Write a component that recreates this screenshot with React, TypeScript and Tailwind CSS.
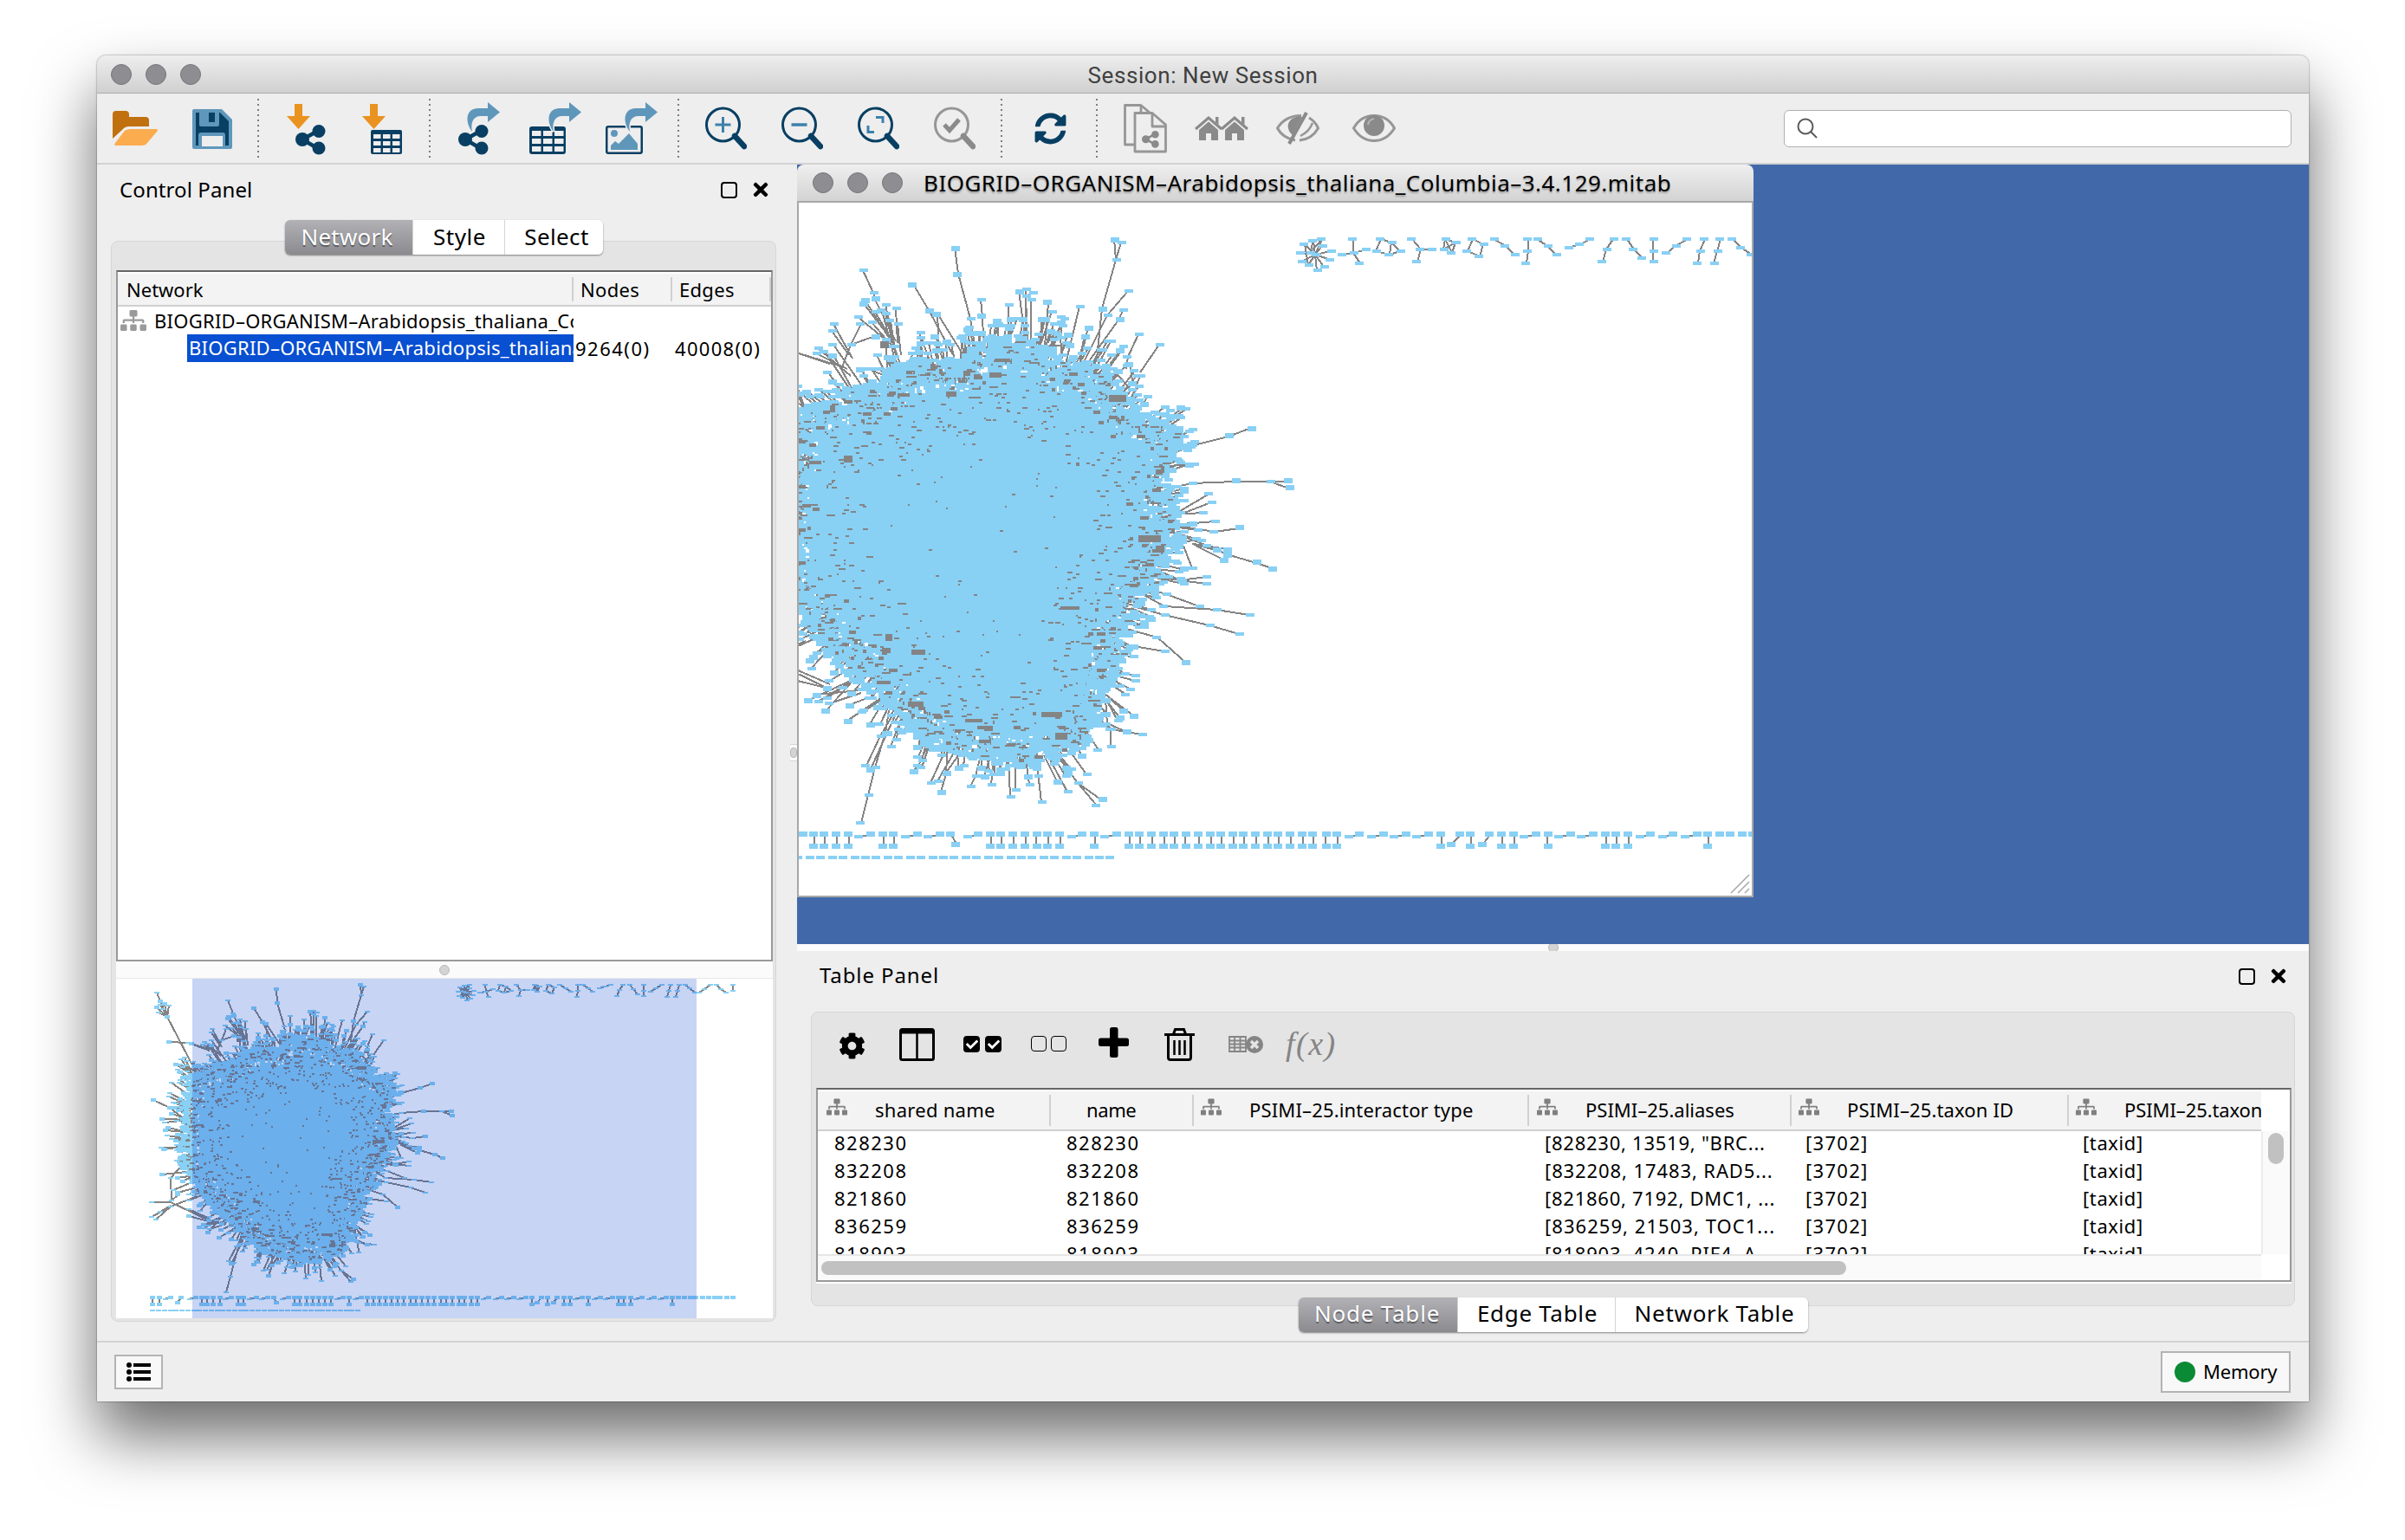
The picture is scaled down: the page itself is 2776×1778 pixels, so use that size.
import type { ReactNode } from "react";
import { FaCheck, FaCog, FaSitemap, FaSyncAlt, FaTimes } from "react-icons/fa";

type Pt = [number, number];
type Chain = Pt[];

/* ---------- network model ---------- */

function makeRandom(seed: number) {
  let s = seed;
  return () => {
    s = (s + 0x6d2b79f5) | 0;
    let t = Math.imul(s ^ (s >>> 15), 1 | s);
    t = (t + Math.imul(t ^ (t >>> 7), 61 | t)) ^ t;
    return ((t ^ (t >>> 14)) >>> 0) / 4294967296;
  };
}

const OUTLINE: Pt[] = [
  [2, 253], [23, 243], [60, 233], [100, 223], [121, 199], [149, 193], [190, 196], [206, 176],
  [243, 166], [280, 179], [304, 196], [337, 199], [353, 213], [370, 236], [390, 256], [428, 268],
  [425, 283], [415, 306], [412, 329], [418, 339], [422, 366], [428, 389], [415, 406], [398, 419],
  [404, 436], [384, 449], [376, 479], [357, 499], [364, 519], [351, 539], [341, 563], [337, 586],
  [325, 606], [317, 619], [288, 630], [264, 640], [239, 636], [206, 626], [182, 621], [153, 617],
  [145, 603], [117, 579], [100, 556], [76, 539], [64, 519], [39, 509], [27, 483], [7, 456],
  [-12, 436], [-12, 371], [-3, 319], [0, 280],
];

// Branches are grouped by the sheet of the layout that they were laid out on.
const UPPER: Chain[] = [
  [[330, 640], [272, 497], [266, 476], [237, 396]],
  [[490, 690], [424, 534], [377, 444]], [[520, 690], [444, 546], [424, 534]], [[452, 670], [444, 546]],
  [[556, 670], [541, 564], [504, 408], [497, 318]], [[577, 690], [572, 555], [571, 497]],
  [[895, 700], [914, 528], [953, 360], [948, 288]], [[953, 360], [967, 300]],
  [[860, 720], [928, 552], [987, 468]], [[865, 730], [963, 564], [972, 534]], [[810, 720], [850, 522]],
  [[982, 740], [985, 695], [1016, 618]], [[1020, 750], [1075, 654]], [[652, 640], [649, 597], [649, 518]],
  [[694, 640], [697, 459]], [[700, 640], [697, 483], [718, 474]], [[694, 650], [678, 470]],
  [[712, 640], [712, 497]], [[750, 660], [759, 507]], [[798, 700], [795, 632], [798, 555]],
  [[755, 650], [800, 590], [806, 564]], [[740, 640], [742, 567]], [[745, 657], [819, 654]],
  [[762, 650], [776, 581]], [[600, 690], [615, 570]], [[590, 690], [600, 588]], [[850, 720], [874, 594]],
  [[850, 700], [863, 624]], [[880, 740], [928, 642]], [[875, 730], [916, 672]], [[640, 660], [674, 564]],
  [[700, 660], [694, 588]], [[175, 730], [203, 654], [228, 582]], [[203, 654], [272, 624]],
  [[205, 700], [154, 582]], [[195, 690], [149, 606]], [[200, 760], [110, 666]], [[190, 740], [103, 684]],
  [[230, 790], [150, 654]], [[180, 730], [40, 676]], [[75, 880], [50, 800]], [[215, 840], [125, 680]],
  [[225, 850], [150, 690]], [[345, 690], [335, 582]], [[325, 660], [223, 558]], [[320, 650], [242, 500]],
  [[325, 650], [301, 516]], [[335, 650], [330, 530]], [[318, 640], [272, 540]], [[322, 650], [238, 515]],
  [[318, 660], [262, 576]], [[324, 660], [312, 567]], [[320, 670], [288, 536]], [[330, 690], [300, 546]],
  [[400, 680], [399, 609]], [[525, 740], [517, 624]], [[520, 730], [531, 600]], [[476, 750], [473, 642]],
  [[410, 760], [399, 650]], [[440, 760], [420, 650]], [[300, 760], [251, 738]], [[250, 780], [228, 740]],
  [[215, 830], [170, 790]], [[210, 850], [155, 816]], [[260, 860], [220, 800]], [[290, 850], [247, 790]],
  [[310, 800], [300, 640]], [[330, 800], [320, 660]], [[350, 760], [375, 684]], [[1000, 800], [988, 720]],
  [[985, 800], [943, 736]], [[1000, 820], [1022, 762]], [[985, 850], [1015, 798]],
  [[1090, 1034], [1154, 1014], [1170, 1000], [1272, 971], [1335, 942]],
  [[1100, 1150], [1168, 1134], [1291, 1125], [1388, 1125], [1437, 1125]], [[1388, 1125], [1442, 1149]],
  [[1100, 1076], [1173, 1065]], [[1110, 1062], [1125, 1050]], [[1130, 1230], [1215, 1170]],
  [[1130, 1240], [1223, 1200]], [[1120, 1240], [1197, 1238]], [[1100, 1275], [1170, 1272], [1232, 1266]],
  [[1080, 1276], [1183, 1294]], [[1110, 1280], [1230, 1299], [1300, 1287]], [[1110, 1300], [1178, 1323]],
  [[1120, 1310], [1210, 1352], [1266, 1380], [1350, 1407], [1393, 1428]], [[1170, 1345], [1266, 1362]],
  [[1165, 1342], [1240, 1366]], [[1175, 1350], [1257, 1398]], [[1140, 1350], [1168, 1428], [1145, 1430]],
  [[1080, 1440], [1134, 1467], [1208, 1455]], [[1134, 1467], [1208, 1482]],
  [[1000, 1400], [1085, 1416], [1145, 1432]], [[1000, 900], [1030, 860], [1040, 835]],
  [[1060, 960], [1105, 914]], [[1055, 950], [1073, 918]], [[1110, 980], [1145, 971]],
];

const LOWER: Chain[] = [
  [[1010, 110], [1095, 138], [1188, 180]], [[1000, 120], [1086, 180], [1237, 191], [1330, 210]],
  [[1000, 180], [1090, 207], [1217, 243], [1300, 276]], [[980, 255], [1068, 288], [1151, 375]],
  [[930, 312], [1000, 318], [1090, 336]], [[940, 350], [1000, 352]], [[920, 400], [1008, 420]],
  [[930, 415], [1006, 437]], [[915, 420], [993, 467]], [[920, 440], [980, 484]], [[1010, 245], [1050, 222]],
  [[900, 470], [1002, 558]], [[905, 470], [972, 540]], [[920, 500], [925, 590], [938, 608]],
  [[935, 610], [938, 668]], [[870, 570], [938, 608], [1026, 621]], [[920, 500], [957, 573]],
  [[925, 510], [963, 566]], [[930, 590], [985, 617]], [[770, 670], [845, 790], [896, 867]],
  [[845, 790], [914, 849]], [[820, 680], [870, 762]], [[780, 680], [825, 744]], [[750, 680], [815, 822]],
  [[745, 690], [786, 786]], [[770, 690], [811, 768]], [[725, 700], [742, 858]], [[728, 700], [732, 768]],
  [[697, 710], [707, 800]], [[668, 700], [668, 816]], [[646, 700], [654, 840]], [[640, 700], [640, 744]],
  [[610, 670], [600, 798]], [[574, 670], [556, 770], [541, 806]], [[604, 670], [580, 768]],
  [[475, 650], [473, 759], [458, 822]], [[480, 650], [428, 792]], [[500, 670], [448, 786]],
  [[520, 670], [473, 755]], [[425, 640], [392, 729], [379, 750]], [[407, 590], [390, 666]],
  [[345, 570], [316, 666]], [[350, 560], [330, 642]], [[320, 560], [286, 632], [243, 729]],
  [[310, 540], [300, 620], [270, 738], [252, 831], [228, 930]], [[335, 540], [306, 620], [257, 747]],
  [[315, 470], [257, 588]], [[310, 480], [193, 576]], [[320, 480], [235, 546]], [[330, 480], [277, 528]],
  [[325, 470], [240, 540]], [[210, 430], [130, 540]], [[210, 430], [83, 504]], [[205, 436], [110, 510]],
  [[205, 440], [134, 495]], [[250, 465], [105, 486]], [[150, 470], [30, 430]], [[140, 450], [30, 388]],
  [[145, 316], [90, 396]], [[140, 310], [85, 366]], [[130, 312], [105, 342]], [[220, 380], [140, 438]],
  [[210, 360], [158, 366]], [[120, 282], [30, 330]], [[110, 225], [30, 290]], [[110, 235], [55, 270]],
  [[90, 270], [50, 274]], [[90, 160], [40, 195]], [[80, 150], [50, 180]], [[260, 490], [198, 522]],
  [[230, 480], [140, 516]], [[370, 540], [335, 606]],
];

const WESTERN: Chain[] = [
  [[212, 440], [143, 244], [127, 190], [119, 162]], [[143, 244], [120, 212]], [[143, 244], [148, 206]],
  [[143, 244], [134, 216]], [[143, 244], [124, 230]], [[143, 244], [128, 203]], [[143, 244], [138, 200]],
  [[240, 356], [190, 331], [147, 329]], [[197, 436], [162, 404]], [[197, 432], [174, 387]],
  [[197, 430], [182, 380]], [[198, 434], [172, 404]], [[198, 430], [187, 392]], [[205, 500], [192, 470]],
  [[200, 610], [150, 550], [112, 524]], [[205, 520], [153, 467]], [[205, 545], [150, 500]],
  [[205, 540], [158, 534]], [[205, 550], [148, 512]], [[205, 530], [180, 502]], [[205, 555], [176, 540]],
  [[200, 592], [131, 587]], [[195, 592], [138, 601]], [[200, 600], [165, 594]], [[205, 600], [184, 580]],
  [[200, 640], [178, 625]], [[200, 660], [144, 644]], [[200, 657], [154, 655]], [[200, 650], [166, 640]],
  [[200, 684], [130, 684]], [[195, 672], [140, 692]], [[200, 700], [165, 694]], [[195, 680], [136, 690]],
  [[205, 740], [178, 738]], [[205, 720], [182, 710]], [[205, 765], [131, 777]], [[182, 735], [151, 786], [153, 864]],
  [[205, 780], [166, 788]], [[205, 800], [158, 828]], [[210, 820], [166, 838]], [[205, 780], [178, 800]],
  [[212, 848], [151, 884], [118, 929]], [[153, 868], [109, 868]], [[151, 870], [237, 932]],
  [[151, 884], [109, 918]], [[151, 880], [128, 900]], [[153, 864], [166, 846]],
];

// Small components along the top edge, each a list of nodes and the links between them.
const SMALL: { nodes: Pt[]; links: Pt[] }[] = [
  {
    nodes: [[152, 160], [118, 126], [144, 114], [172, 108], [175, 132], [107, 156], [201, 150], [112, 186], [133, 198], [159, 213], [180, 204], [196, 180], [138, 156]],
    links: [[0, 1], [0, 2], [0, 3], [0, 4], [0, 5], [0, 6], [0, 7], [0, 8], [0, 9], [0, 10], [0, 11], [1, 8], [2, 12], [3, 12]],
  },
  { nodes: [[269, 154], [264, 108], [306, 141], [233, 162], [285, 192]], links: [[0, 1], [0, 2], [0, 3], [0, 4]] },
  { nodes: [[348, 108], [384, 120], [410, 150], [374, 162], [337, 150]], links: [[0, 1], [1, 2], [2, 3], [3, 4], [4, 0], [1, 3]] },
  { nodes: [[468, 144], [442, 108], [504, 144], [459, 186]], links: [[0, 1], [0, 2], [0, 3]] },
  { nodes: [[546, 108], [577, 120], [540, 144], [562, 156]], links: [[0, 1], [1, 2], [2, 3], [0, 2], [0, 3], [1, 3]] },
  { nodes: [[625, 108], [661, 126], [646, 165], [609, 150]], links: [[0, 1], [1, 2], [2, 3], [3, 0]] },
  { nodes: [[692, 108], [724, 132], [753, 159]], links: [[0, 1], [1, 2]] },
  { nodes: [[792, 108], [792, 150], [787, 189]], links: [[0, 1], [1, 2]] },
  { nodes: [[823, 108], [854, 132], [880, 159]], links: [[0, 1], [1, 2]] },
  { nodes: [[980, 108], [949, 123], [917, 135]], links: [[0, 1], [1, 2]] },
  { nodes: [[1053, 108], [1032, 144], [1017, 183]], links: [[0, 1], [1, 2]] },
  { nodes: [[1090, 108], [1111, 141], [1137, 171]], links: [[0, 1], [1, 2]] },
  { nodes: [[1173, 108], [1173, 150], [1173, 186]], links: [[0, 1], [1, 2]] },
  { nodes: [[1273, 108], [1241, 132], [1210, 156]], links: [[0, 1], [1, 2]] },
  { nodes: [[1325, 108], [1314, 150], [1306, 192]], links: [[0, 1], [1, 2]] },
  { nodes: [[1372, 108], [1366, 150], [1356, 192]], links: [[0, 1], [1, 2]] },
  { nodes: [[1409, 108], [1435, 135], [1466, 162]], links: [[0, 1], [1, 2]] },
  { nodes: [[1553, 108], [1520, 138], [1490, 162]], links: [[0, 1], [1, 2]] },
  { nodes: [[1586, 108], [1614, 138], [1641, 162]], links: [[0, 1], [1, 2]] },
  { nodes: [[1681, 108], [1681, 150]], links: [[0, 1]] },
];

// Bottom rail: "p" a vertical pair, "d" a flat pair, "s" a slanted pair, "n" a lone node.
const RAIL: [string, number, number?][] = [
  ["p", -90], ["p", -76], ["d", -62, -50], ["s", -36, -28], ["d", -9, 4],
  ["p", 17], ["p", 29], ["p", 43], ["p", 57], ["d", 69, 83], ["p", 97], ["p", 109], ["d", 123, 137],
  ["d", 149, 163], ["s", 181, 175], ["d", 194, 207], ["p", 221], ["p", 233], ["p", 247], ["p", 261], ["p", 274],
  ["p", 287], ["p", 301], ["d", 314, 327], ["p", 341], ["d", 353, 367], ["p", 381], ["p", 393], ["p", 407],
  ["p", 421], ["p", 433], ["p", 446], ["p", 461], ["p", 475], ["p", 487], ["p", 501], ["p", 513], ["p", 527],
  ["p", 541], ["p", 553], ["p", 567], ["p", 581], ["p", 593], ["p", 608], ["p", 621], ["d", 635, 647],
  ["d", 661, 675], ["d", 687, 701], ["d", 713, 727], ["p", 741], ["s", 753, 763], ["p", 775], ["s", 789, 797],
  ["p", 811], ["p", 825], ["d", 837, 851], ["p", 864], ["d", 877, 891], ["d", 903, 917], ["p", 931], ["p", 943],
  ["p", 957], ["d", 970, 983], ["d", 997, 1009], ["d", 1023, 1036], ["p", 1049], ["n", 1063], ["n", 1075],
  ["n", 1089], ["n", 1101], ["n", 1115], ["n", 1128], ["n", 1141], ["n", 1154], ["n", 1168], ["n", 1181],
];

type Speck = { x: number; y: number; w: number; h: number };

function buildNetwork() {
  const rnd = makeRandom(9264);
  const nodes: { x: number; y: number; tall: boolean }[] = [];
  const lines: [Pt, Pt][] = [];
  const gray: Speck[] = [];
  const white: Speck[] = [];
  const addNode = (x: number, y: number, tall = rnd() < 0.35) => nodes.push({ x, y, tall });
  const addChains = (chains: Chain[], place: (p: Pt) => Pt) => {
    for (const chain of chains) {
      const pts = chain.map(place);
      pts.slice(1).forEach((p, i) => {
        lines.push([pts[i], p]);
        addNode(p[0], p[1]);
      });
    }
  };
  addChains(UPPER, ([x, y]) => [x * 0.408 - 22, y / 3 - 54]);
  addChains(LOWER, ([x, y]) => [x * 0.408 - 22, y / 3 + 406]);
  addChains(WESTERN, ([x, y]) => [x * 0.969 - 197, y * 0.649 - 44.7]);

  const center: Pt = [205, 400];
  for (let i = 0; i < OUTLINE.length; i++) {
    const a = OUTLINE[i];
    const b = OUTLINE[(i + 1) % OUTLINE.length];
    const len = Math.hypot(b[0] - a[0], b[1] - a[1]);
    const at = (): Pt => {
      const t = rnd();
      return [a[0] + (b[0] - a[0]) * t, a[1] + (b[1] - a[1]) * t];
    };
    const along = (p: Pt, d: number): Pt => {
      const r = Math.hypot(p[0] - center[0], p[1] - center[1]);
      return [p[0] + ((p[0] - center[0]) / r) * d, p[1] + ((p[1] - center[1]) / r) * d];
    };
    const upper = (a[1] + b[1]) / 2 < 300;
    const reach = (upper ? 24 : 16) + rnd() * 28;
    for (let k = 0; k < len / (upper ? 2.2 : 3); k++) {
      const p = at();
      const out = along(p, 2 + Math.pow(rnd(), 1.6) * reach);
      out[0] += (rnd() - 0.5) * 16;
      out[1] += (rnd() - 0.5) * 8;
      lines.push([along(p, -14), out]);
      addNode(out[0], out[1]);
    }
    for (let k = 0; k < len; k++) {
      const q = along(at(), 16 - rnd() * 30);
      addNode(q[0] + (rnd() - 0.5) * 8, q[1], rnd() < 0.5);
    }
    for (let k = 0; k < len / 1.9; k++) {
      const d = Math.pow(rnd(), 1.6) * 95;
      const q = along(at(), 6 - d);
      const near = d < 45;
      gray.push({
        x: q[0] + (rnd() - 0.5) * 10,
        y: q[1] + (rnd() - 0.5) * 10,
        w: near ? 2 + Math.pow(rnd(), 1.6) * 9 : 2 + rnd() * 4,
        h: near && rnd() < 0.25 ? 4 : 2,
      });
    }
    for (let k = 0; k < len / 3; k++) {
      const q = along(at(), 4 - Math.pow(rnd(), 1.5) * 26);
      white.push({ x: q[0], y: q[1], w: 2 + rnd() * 3, h: rnd() < 0.3 ? 4 : 2 });
    }
  }
  for (let k = 0; k < 60; k++) {
    const ang = rnd() * Math.PI * 2;
    const r = Math.sqrt(rnd());
    gray.push({ x: 205 + Math.cos(ang) * 150 * r, y: 385 + Math.sin(ang) * 170 * r, w: 2 + rnd() * 2, h: 2 });
  }
  gray.push(
    { x: 358, y: 221, w: 20, h: 8 }, { x: 392, y: 383, w: 26, h: 7 }, { x: 279, y: 587, w: 24, h: 6 },
    { x: 192, y: 596, w: 20, h: 4 }, { x: 206, y: 604, w: 18, h: 4 }, { x: 130, y: 516, w: 16, h: 6 },
    { x: 302, y: 466, w: 22, h: 4 }, { x: 52, y: 292, w: 10, h: 8 }, { x: 100, y: 498, w: 8, h: 8 },
    { x: 93, y: 160, w: 10, h: 8 }, { x: 170, y: 218, w: 12, h: 6 }, { x: 114, y: 220, w: 14, h: 4 },
    { x: 90, y: 551, w: 16, h: 4 }, { x: 126, y: 575, w: 18, h: 6 }, { x: 296, y: 611, w: 14, h: 8 },
    { x: 226, y: 180, w: 18, h: 4 }, { x: 220, y: 196, w: 14, h: 6 }, { x: 408, y: 400, w: 14, h: 4 },
  );

  for (const { nodes: ns, links } of SMALL) {
    const pts = ns.map(([x, y]): Pt => [x * 0.3827 + 538, y / 3 + 6]);
    links.forEach(([i, j]) => lines.push([pts[i], pts[j]]));
    pts.forEach(([x, y]) => addNode(x, y, false));
  }
  for (const [kind, x, x2 = x] of RAIL) {
    if (kind === "d") {
      lines.push([[x, 731], [x2, 730]]);
      addNode(x, 732, false);
      addNode(x2, 729, true);
      continue;
    }
    addNode(x2, 729, true);
    if (kind === "n") continue;
    const y2 = kind === "s" ? 740 : 743;
    lines.push([[x, y2], [x2, 729]]);
    addNode(x, y2, true);
  }
  for (let i = 0; i < 36; i++) addNode(-90 + i * 12.85, 756, false);
  return { nodes, lines, gray, white };
}

const NETWORK = buildNetwork();

function NetworkGraph(props: {
  width: number;
  height: number;
  scale: number;
  dx: number;
  dy: number;
  node: [number, number, number];
  snap: number;
}) {
  const { width, height, scale, dx, dy, node, snap } = props;
  const px = (x: number) => Math.round((x * scale + dx) / snap) * snap;
  const py = (y: number) => Math.round((y * scale + dy) / snap) * snap;
  const box = (x: number, y: number, w: number, h: number) => `M${x} ${y}h${w}v${h}h${-w}z`;
  const speck = (s: Speck) =>
    box(px(s.x), py(s.y), Math.max(2, Math.round((s.w * scale) / snap) * snap), Math.max(2, Math.round((s.h * scale) / snap) * snap));
  const [w, low, high] = node;
  const nodes = NETWORK.nodes
    .map((n) => box(px(n.x - w / scale / 2), py(n.y - (n.tall ? high : low) / scale / 2), w, n.tall ? high : low))
    .join("");
  const lines = NETWORK.lines.map(([a, b]) => `M${px(a[0])} ${py(a[1])}L${px(b[0])} ${py(b[1])}`).join("");
  const blob = "M" + OUTLINE.map(([x, y]) => `${px(x)} ${py(y)}`).join("L") + "z";
  return (
    <svg width={width} height={height} viewBox={`0 0 ${width} ${height}`} shapeRendering="crispEdges">
      <path d={blob} fill="#89d0f5" />
      <path d={lines} stroke="#848484" strokeWidth="2" fill="none" />
      <path d={NETWORK.white.map(speck).join("")} fill="#ffffff" />
      <path d={nodes} fill="#89d0f5" />
      <path d={NETWORK.gray.map(speck).join("")} fill="#848484" />
    </svg>
  );
}

/* ---------- icons ---------- */

const NAVY = "#083f63";
const STEEL = "#5f97bb";
const ORANGE = "#ea9320";
const MUTED = "#969696";

function ToolIcon({ w, className, children }: { w: number; className: string; children: ReactNode }) {
  return (
    <svg width={w} height="68" viewBox={`0 0 ${w} 68`} fill="none" className={`shrink-0 ${className}`}>
      {children}
    </svg>
  );
}

function Share({ x, y, s = 1, color = NAVY }: { x: number; y: number; s?: number; color?: string }) {
  return (
    <g transform={`translate(${x} ${y}) scale(${s})`} fill={color} stroke={color}>
      <path d="M8 17L27 6.500M8 17L27 28" strokeWidth="4.500" />
      <circle cx="8" cy="17" r="8" stroke="none" />
      <circle cx="27" cy="7.500" r="7.500" stroke="none" />
      <circle cx="27" cy="27" r="7.500" stroke="none" />
    </g>
  );
}

function DownArrow() {
  return <path d="M9 6h9v14h9L13.500 35L0 20h9z" fill={ORANGE} />;
}

function CurvedArrow({ x }: { x: number }) {
  return (
    <path
      transform={`translate(${x} 0)`}
      d="M6 38C-3 26 -1 11 13 11H24V4L38 15.500L24 27V20H16C7 20 4 28 6 38Z"
      fill={STEEL}
      stroke="#eeeeee"
      strokeWidth="3"
      paintOrder="stroke"
    />
  );
}

function Lens({ color, handle, children }: { color: string; handle?: string; children: ReactNode }) {
  return (
    <>
      <circle cx="20.500" cy="30" r="19" stroke={color} strokeWidth="3" />
      <path d="M34 43L45 55" stroke={handle ?? color} strokeWidth="6.500" strokeLinecap="round" />
      {children}
    </>
  );
}

function Separator({ className }: { className: string }) {
  return (
    <div
      className={`h-[68px] w-0.5 shrink-0 bg-[repeating-linear-gradient(to_bottom,#7d7d7d_0_2px,transparent_2px_6px)] ${className}`}
    />
  );
}

function Toolbar() {
  return (
    <div className="flex h-[82px] items-center border-b-2 border-[#d2d2d2] bg-[#eeeeee]">
      <ToolIcon w={52} className="ml-[18px]">
        <path d="M0 46V18q0-4 4-4h11q4 0 4 4v3h19q4 0 4 4v7H19q-5 0-8 4z" fill="#c1700f" />
        <path d="M21 35H50q3 0 1.500 2.500L40 51q-2 3-6 3H4q-3 0-1-3L13 38q2.500-3 8-3z" fill="#fbac4f" />
      </ToolIcon>
      <ToolIcon w={46} className="ml-10">
        <path d="M2 12H34L46 24V56q0 2-2 2H2q-2 0-2-2V14q0-2 2-2z" fill={STEEL} />
        <path d="M4 16V54H7V42q0-3 3-3H35q3 0 3 3V54H42V26L32 16H31V30q0 2-2 2H10q-2 0-2-2V16z" fill={NAVY} />
        <path d="M19 16h7v11h-7z" fill={NAVY} />
        <path d="M11 43h24v12H11z" fill="#eeeeee" />
      </ToolIcon>
      <Separator className="ml-[29px]" />

      <ToolIcon w={46} className="ml-8">
        <DownArrow />
        <Share x={10} y={30} />
      </ToolIcon>
      <ToolIcon w={46} className="ml-[41px]">
        <DownArrow />
        <rect x="10" y="36" width="36" height="28" rx="2" fill={NAVY} />
        <g fill="#eeeeee">
          {[41, 49, 57].map((y) =>
            [13, 24, 35].map((x) => <rect key={`${x}-${y}`} x={x} y={y} width="8.500" height="5" />),
          )}
        </g>
      </ToolIcon>
      <Separator className="ml-[31px]" />

      <ToolIcon w={48} className="ml-8">
        <Share x={0} y={30} />
        <CurvedArrow x={10} />
      </ToolIcon>
      <ToolIcon w={60} className="ml-[34px]">
        <rect x="0" y="32" width="42" height="32" rx="3" fill={NAVY} />
        <g fill="#eeeeee">
          {[37, 46, 55].map((y) =>
            [3, 16, 29].map((x) => <rect key={`${x}-${y}`} x={x} y={y} width="10.500" height="6" />),
          )}
        </g>
        <CurvedArrow x={22} />
      </ToolIcon>
      <ToolIcon w={60} className="ml-7">
        <rect x="1.250" y="32.250" width="40.500" height="30.500" rx="2" stroke={NAVY} strokeWidth="2.500" />
        <circle cx="10" cy="40" r="4" fill={STEEL} />
        <path d="M6 59V54L11 49L15 52L27 40L37 52V59z" fill={STEEL} />
        <CurvedArrow x={22} />
      </ToolIcon>
      <Separator className="ml-[23px]" />

      <ToolIcon w={48} className="ml-[30px]">
        <Lens color={NAVY}>
          <path d="M20.500 21v18M11.500 30h18" stroke="#3d80ab" strokeWidth="3" />
        </Lens>
      </ToolIcon>
      <ToolIcon w={48} className="ml-10">
        <Lens color={NAVY}>
          <path d="M11.500 30h18" stroke="#3d80ab" strokeWidth="3.500" />
        </Lens>
      </ToolIcon>
      <ToolIcon w={48} className="ml-10">
        <Lens color={NAVY}>
          <path d="M21 21.500H29V28M12 31V38.500H19" stroke="#3d80ab" strokeWidth="3" />
        </Lens>
      </ToolIcon>
      <ToolIcon w={48} className="ml-10">
        <Lens color={MUTED} handle="#8a8a8a">
          <path d="M12 30L18 36.500L29 24" stroke="#8a8a8a" strokeWidth="5" />
        </Lens>
      </ToolIcon>
      <Separator className="ml-[29px]" />

      <FaSyncAlt className="ml-[37px] size-[37px] shrink-0 text-[#083f63]" />
      <Separator className="ml-[34px]" />

      <ToolIcon w={50} className="ml-[30px]">
        <g stroke={MUTED} strokeWidth="2.800" strokeLinejoin="round">
          <path d="M12 53H1.500V7.500H20L30 16M20 7.500V15" />
          <path d="M13 16.500H33L48.500 30V61H13z" fill="#eeeeee" />
          <path d="M33 16.500V32H48" />
        </g>
        <Share x={21} y={37} s={0.57} color="#8a8a8a" />
      </ToolIcon>
      <ToolIcon w={62} className="ml-8">
        {[0, 30].map((x) => (
          <g key={x} transform={`translate(${x} 0)`}>
            <path d="M1 35L16 22L31 35" stroke="#8a8a8a" strokeWidth="3.200" />
            <path d="M24 21h3.500v9L24 27z" fill="#8a8a8a" />
            <path d="M5 36L16 26.500L27 36V48H19V40H13V48H5z" fill="#8a8a8a" />
          </g>
        ))}
      </ToolIcon>
      <ToolIcon w={50} className="ml-8">
        <path d="M22 48C12 46 5 41 1.500 34C7 25 16 19.500 29 19.500" stroke={MUTED} strokeWidth="3" />
        <path d="M38 22C43 25 46.500 29 48.500 34C44 42 37 47 27 48" stroke={MUTED} strokeWidth="3" />
        <path d="M35 16L15 52" stroke="#8a8a8a" strokeWidth="4" />
        <path d="M30 21C19 19 12 27 14 34C15 39 18 41 19 42z" fill="#8a8a8a" />
        <path d="M42 28C39 36 34 40 28 43" stroke={MUTED} strokeWidth="2.500" />
      </ToolIcon>
      <ToolIcon w={50} className="ml-[38px]">
        <path d="M1.500 34C7 24 15 19.500 25 19.500S43 24 48.500 34C43 43 35 48.500 25 48.500S7 43 1.500 34z" stroke={MUTED} strokeWidth="3" />
        <circle cx="25" cy="31" r="12" fill="#8a8a8a" />
        <path d="M18 30q1-6 7-7" stroke="#b5b5b5" strokeWidth="2" />
      </ToolIcon>

      <div className="mr-5 ml-auto flex h-[43px] w-[586px] items-center rounded-md border border-[#b0b0b0] bg-white pl-3.5">
        <svg width="24" height="24" viewBox="0 0 24 24" fill="none" stroke="#5a5a5a" strokeWidth="2">
          <circle cx="10" cy="10" r="8.500" />
          <path d="M16 16L23 23" />
        </svg>
      </div>
    </div>
  );
}

/* ---------- shared pieces ---------- */

function Lights({ className = "" }: { className?: string }) {
  return (
    <div className={`flex gap-4 ${className}`}>
      {[0, 1, 2].map((i) => (
        <span key={i} className="size-6 rounded-full border border-[#75757a] bg-[#8e8d92]" />
      ))}
    </div>
  );
}

function PanelHeader({ title, titleClass, className }: { title: string; titleClass: string; className: string }) {
  return (
    <div className={`flex h-[58px] items-center text-[24px] leading-8 ${className}`}>
      <span className={titleClass}>{title}</span>
      <span className="ml-auto h-[19px] w-[19px] rounded-[4px] border-2 border-black" />
      <FaTimes className="ml-[15px] size-6 text-black" />
    </div>
  );
}

function Tab({ active, className, children }: { active?: boolean; className: string; children: ReactNode }) {
  return (
    <div
      className={`flex h-10 items-center justify-center whitespace-nowrap ${
        active
          ? "rounded-l-md bg-linear-to-b from-[#b2b1b6] to-[#8b8a8f] text-white [text-shadow:0_2px_1px_rgba(0,0,0,0.4)]"
          : "border-l border-[#d4d4d4] bg-white text-black last:rounded-r-md"
      } ${className}`}
    >
      {children}
    </div>
  );
}

function Knob({ className = "" }: { className?: string }) {
  return <span className={`size-3 shrink-0 rounded-full border border-[#b8b8b8] bg-[#d4d4d4] ${className}`} />;
}

/* ---------- control panel ---------- */

const ROW = "grid h-8 grid-cols-[526px_114px_1fr] items-center leading-8 whitespace-nowrap";

function ControlPanel() {
  return (
    <section className="flex w-[800px] flex-col pl-4">
      <PanelHeader title="Control Panel" titleClass="tracking-[0.1px]" className="pr-[22px] pl-[10px]" />
      <div className="relative z-10 mt-1.5 ml-[201px] flex w-[367px] self-start rounded-md text-[26px] shadow-[0_1px_2px_rgba(0,0,0,0.45)]">
        <Tab active className="w-[147px] pr-1 pb-px tracking-[0.2px]">Network</Tab>
        <Tab className="w-[106px] pb-px pl-0.5 tracking-[0.5px]">Style</Tab>
        <Tab className="w-[114px] pb-px pl-1.5 tracking-[0.4px]">Select</Tab>
      </div>
      <div className="-mt-4 flex h-[1248px] w-[768px] flex-col rounded-lg border border-[#d6d6d6] bg-[#e4e4e4] pt-[33px] pr-[3px] pl-[5px] text-[22px]">
        <div className="h-[798px] border-2 border-[#999999] border-t-[#666666] bg-white pt-0.5">
          <div className={`${ROW} h-[38px] border-b-2 border-[#d0d0d0] bg-[#f3f3f3] pb-px`}>
            <span className="flex h-7 items-center border-r-2 border-[#d0d0d0] pl-2.5">Network</span>
            <span className="flex h-7 items-center border-r-2 border-[#d0d0d0] pl-2 tracking-[0.3px]">Nodes</span>
            <span className="flex h-7 items-center border-r-2 border-[#d0d0d0] pl-2 tracking-[0.3px]">Edges</span>
          </div>
          <div className={ROW}>
            <span className="flex items-center overflow-hidden leading-[30px]">
              <FaSitemap className="ml-[3px] h-[26px] w-[30px] shrink-0 text-[#9a9a9a]" />
              <span className="ml-[9px] tracking-[0.25px]">BIOGRID–ORGANISM–Arabidopsis_thaliana_Columbia</span>
            </span>
          </div>
          <div className={ROW}>
            <span className="ml-20 h-8 overflow-hidden bg-[#084fd1] pl-0.5 leading-[30px] tracking-[0.25px] text-white">
              BIOGRID–ORGANISM–Arabidopsis_thaliana_Columbia
            </span>
            <span className="pl-0.5 leading-[30px] tracking-[1.5px]">9264(0)</span>
            <span className="pl-[3px] leading-[30px] tracking-[1.3px]">40008(0)</span>
          </div>
        </div>
        <div className="flex h-5 items-center justify-center border-b border-[#e8e8e8] bg-[#fbfbfb]">
          <Knob />
        </div>
        <div className="relative h-[392px] bg-white">
          <NetworkGraph width={758} height={392} scale={0.5267} dx={89.6} dy={-15.6} node={[6, 2, 4]} snap={1} />
          <div className="absolute inset-y-0 left-[88px] w-[582px] bg-[rgba(0,59,205,0.22)]" />
        </div>
      </div>
    </section>
  );
}

/* ---------- desktop ---------- */

function Desktop() {
  return (
    <div className="relative h-[900px] overflow-hidden bg-[#4169aa]">
      <div className="absolute top-0 left-0 flex h-[846px] w-[1104px] flex-col overflow-hidden rounded-t-lg">
        <div className="flex h-11 items-center border-b-2 border-[#a8a8a8] bg-linear-to-b from-[#efefef] to-[#d3d3d3] pl-[18px]">
          <Lights />
          <span className="ml-6 text-[26px] leading-9 tracking-[0.48px] whitespace-nowrap text-black [text-shadow:0_2px_2px_rgba(0,0,0,0.3)]">
            BIOGRID–ORGANISM–Arabidopsis_thaliana_Columbia–3.4.129.mitab
          </span>
        </div>
        <div className="relative h-[802px] border-x-2 border-b-2 border-[#a8a8a8] bg-white">
          <NetworkGraph width={1100} height={800} scale={1} dx={0} dy={0} node={[10, 4, 6]} snap={2} />
          <svg width="24" height="24" viewBox="0 0 24 24" className="absolute right-0.5 bottom-0.5" stroke="#a8a8a8" strokeWidth="1.500">
            <path d="M2 23L23 2M10 23L23 10M18 23L23 18" />
          </svg>
        </div>
      </div>
    </div>
  );
}

/* ---------- table panel ---------- */

const COLS = "grid grid-cols-[269px_165px_387px_303px_320px_222px]";
const CELLS = [
  ["828230", '[828230, 13519, "BRC...', "tracking-[0.75px]"],
  ["832208", "[832208, 17483, RAD5...", "tracking-[0.9px]"],
  ["821860", "[821860, 7192, DMC1, ...", "tracking-[0.75px]"],
  ["836259", "[836259, 21503, TOC1...", "tracking-[1.05px]"],
  ["818903", "[818903, 4240, PIF4, A...", "tracking-[0.8px]"],
];
const HEADERS: [string, boolean, string][] = [
  ["shared name", true, "pl-2.5 tracking-[0.27px]"],
  ["name", false, "pl-[41px] tracking-[-0.4px]"],
  ["PSIMI–25.interactor type", true, "pl-2 tracking-[0.16px]"],
  ["PSIMI–25.aliases", true, "pl-[9px]"],
  ["PSIMI–25.taxon ID", true, "pl-2 tracking-[0.13px]"],
  ["PSIMI–25.taxon", true, "pl-2 tracking-[-0.1px]"],
];

function TableTools() {
  return (
    <div className="flex h-[73px] items-center pl-[26px] text-black">
      <FaCog className="mt-1 size-[31px]" />
      <svg width="41" height="38" viewBox="0 0 41 38" fill="none" stroke="currentColor" className="ml-[39px]">
        <rect x="1.500" y="1.500" width="38" height="35" rx="2" strokeWidth="3" />
        <path d="M1 4h39" strokeWidth="5" />
        <path d="M20.500 4v32" strokeWidth="2.500" />
      </svg>
      <span className="ml-[33px] flex gap-1.5">
        {[0, 1].map((i) => (
          <span key={i} className="flex size-[19px] items-center justify-center rounded-[4px] bg-black text-white">
            <FaCheck className="size-3.5" />
          </span>
        ))}
      </span>
      <span className="mb-0.5 ml-[34px] flex gap-[5px]">
        <span className="size-[18px] rounded-[4px] border-[1.5px] border-black" />
        <span className="size-[18px] rounded-[4px] border-[1.5px] border-black" />
      </span>
      <svg width="35" height="35" viewBox="0 0 35 35" className="mb-1 ml-[37px]" fill="currentColor">
        <rect x="13" y="0" width="9.500" height="35" rx="2.500" />
        <rect x="0" y="12.500" width="35" height="9.500" rx="2.500" />
      </svg>
      <svg width="35" height="38" viewBox="0 0 35 38" fill="none" stroke="currentColor" strokeWidth="3" className="ml-[41px]">
        <path d="M0 7.500H35M10.500 7L12.500 1.500H22.500L24.500 7" />
        <path d="M4.500 8V34q0 2.500 2.500 2.500H28q2.500 0 2.500-2.500V8" />
        <path d="M11.500 14V31M17.500 14V31M23.500 14V31" strokeWidth="2.500" />
      </svg>
      <svg width="40" height="20" viewBox="0 0 40 20" fill="none" className="ml-[39px]">
        <path d="M1 1H20V18H1zM1 5.500H20M1 9.500H20M1 13.500H20M7 1V18M13.500 1V18" stroke="#858585" strokeWidth="1.800" />
        <circle cx="30" cy="10" r="10" fill="#858585" />
        <path d="M26 6L34 14M34 6L26 14" stroke="#e4e4e4" strokeWidth="3.500" />
      </svg>
      <span className="mb-0.5 ml-[26px] font-['Liberation_Serif',serif] text-[38px] leading-9 tracking-[1.5px] text-[#858585] italic">
        f(x)
      </span>
    </div>
  );
}

function TablePanel() {
  return (
    <section className="flex flex-col">
      <PanelHeader title="Table Panel" titleClass="mb-0.5 tracking-[0.9px]" className="pr-[23px] pl-[26px]" />
      <div className="mx-4 mt-3 h-[340px] rounded-lg border border-[#d6d6d6] bg-[#e4e4e4] pr-[3px] pl-[5px]">
        <TableTools />
        <div className="mt-[14px] flex h-[224px] border-2 border-[#999999] border-t-[#666666] bg-white pt-0.5 text-[22px] shadow-[0_2px_0_#ffffff]">
          <div className="flex w-[1666px] flex-col">
            <div className={`${COLS} h-[46px] shrink-0 items-center overflow-hidden border-b-2 border-[#d0d0d0] bg-[#f3f3f3]`}>
              {HEADERS.map(([label, icon, cls]) => (
                <div
                  key={label}
                  className={`flex h-9 items-center overflow-hidden border-r-2 border-[#d0d0d0] pb-0.5 whitespace-nowrap last:border-r-0 ${cls}`}
                >
                  {icon && <FaSitemap className="mr-8 mb-1.5 h-[22px] w-6 shrink-0 text-[#808080]" />}
                  {label}
                </div>
              ))}
            </div>
            <div className="h-[142px] overflow-hidden">
              {CELLS.map(([id, aliases, cls], i) => (
                <div key={id} className={`${COLS} h-8 leading-8 whitespace-nowrap ${i === 0 ? "-mt-[3px]" : ""}`}>
                  <span className="pl-[19px] tracking-[1.5px]">{id}</span>
                  <span className="pl-[18px] tracking-[1.5px]">{id}</span>
                  <span />
                  <span className={`pl-[18px] ${cls}`}>{aliases}</span>
                  <span className="pl-4 tracking-[1.3px]">[3702]</span>
                  <span className="pl-4 tracking-[0.6px]">[taxid]</span>
                </div>
              ))}
            </div>
            <div className="flex h-[30px] items-center border-t-2 border-[#e6e6e6] bg-[#fafafa] pl-1">
              <div className="h-4 w-[1183px] rounded-full bg-[#c1c1c1]" />
            </div>
          </div>
          <div className="mt-[46px] flex h-[142px] w-8 justify-center border-l-2 border-[#ececec] bg-[#fafafa] pt-0.5">
            <div className="h-9 w-[18px] rounded-full bg-[#c1c1c1]" />
          </div>
        </div>
      </div>
      <div className="-mt-2.5 ml-[579px] flex w-[588px] rounded-md text-[26px] shadow-[0_1px_2px_rgba(0,0,0,0.45)]">
        <Tab active className="w-[183px] pb-1 pr-0.5 tracking-[0.8px]">Node Table</Tab>
        <Tab className="w-[182px] pb-1 pl-0.5 tracking-[0.7px]">Edge Table</Tab>
        <Tab className="w-[223px] pb-1 pl-1.5 tracking-[0.7px]">Network Table</Tab>
      </div>
    </section>
  );
}

/* ---------- application ---------- */

export default function App() {
  return (
    <div className="h-[1778px] w-[2776px] overflow-hidden bg-white pt-16 pl-[112px] font-['Noto_Sans',sans-serif] text-black">
      <div className="flex h-[1554px] w-[2553px] flex-col rounded-t-[10px] bg-[#eeeeee] shadow-[0_40px_72px_rgba(0,0,0,0.58),0_0_2px_rgba(0,0,0,0.6)]">
        <div className="grid h-11 grid-cols-[1fr_auto_1fr] items-center rounded-t-[10px] border-b border-[#ababab] bg-linear-to-b from-[#eeeeee] to-[#d0d0d0]">
          <Lights className="pl-4" />
          <span className="mt-0.5 font-[Roboto,sans-serif] text-[26px] leading-9 tracking-[0.59px] text-[#404040]">
            Session: New Session
          </span>
        </div>
        <Toolbar />
        <div className="flex h-[1358px]">
          <ControlPanel />
          <div className="flex w-2 flex-col justify-center">
            <div className="flex h-5 items-center justify-center border-y border-[#d4d4d4] bg-[#fafafa]">
              <Knob className="w-2" />
            </div>
          </div>
          <main className="flex w-[1745px] flex-col">
            <Desktop />
            <div className="flex h-2 items-center justify-center overflow-hidden bg-[#fbfbfb]">
              <Knob />
            </div>
            <TablePanel />
          </main>
        </div>
        <footer className="flex h-[70px] items-center justify-between border-t-2 border-[#d2d2d2] pr-[21px] pb-px pl-5">
          <div className="flex h-10 w-14 items-center justify-center border-2 border-[#b3b3b3] bg-[#f8f8f8]">
            <svg width="28" height="22" viewBox="0 0 28 22" fill="#000000">
              {[3, 11, 19].map((y) => (
                <g key={y}>
                  <circle cx="3" cy={y} r="3" />
                  <rect x="8" y={y - 2} width="20" height="4" />
                </g>
              ))}
            </svg>
          </div>
          <div className="flex h-12 w-[150px] items-center border-2 border-[#b3b3b3] bg-[#f8f8f8] pl-3.5 text-[22px] tracking-[-0.2px]">
            <span className="mr-[9px] size-6 rounded-full bg-[#0a8a34]" />
            Memory
          </div>
        </footer>
      </div>
    </div>
  );
}
